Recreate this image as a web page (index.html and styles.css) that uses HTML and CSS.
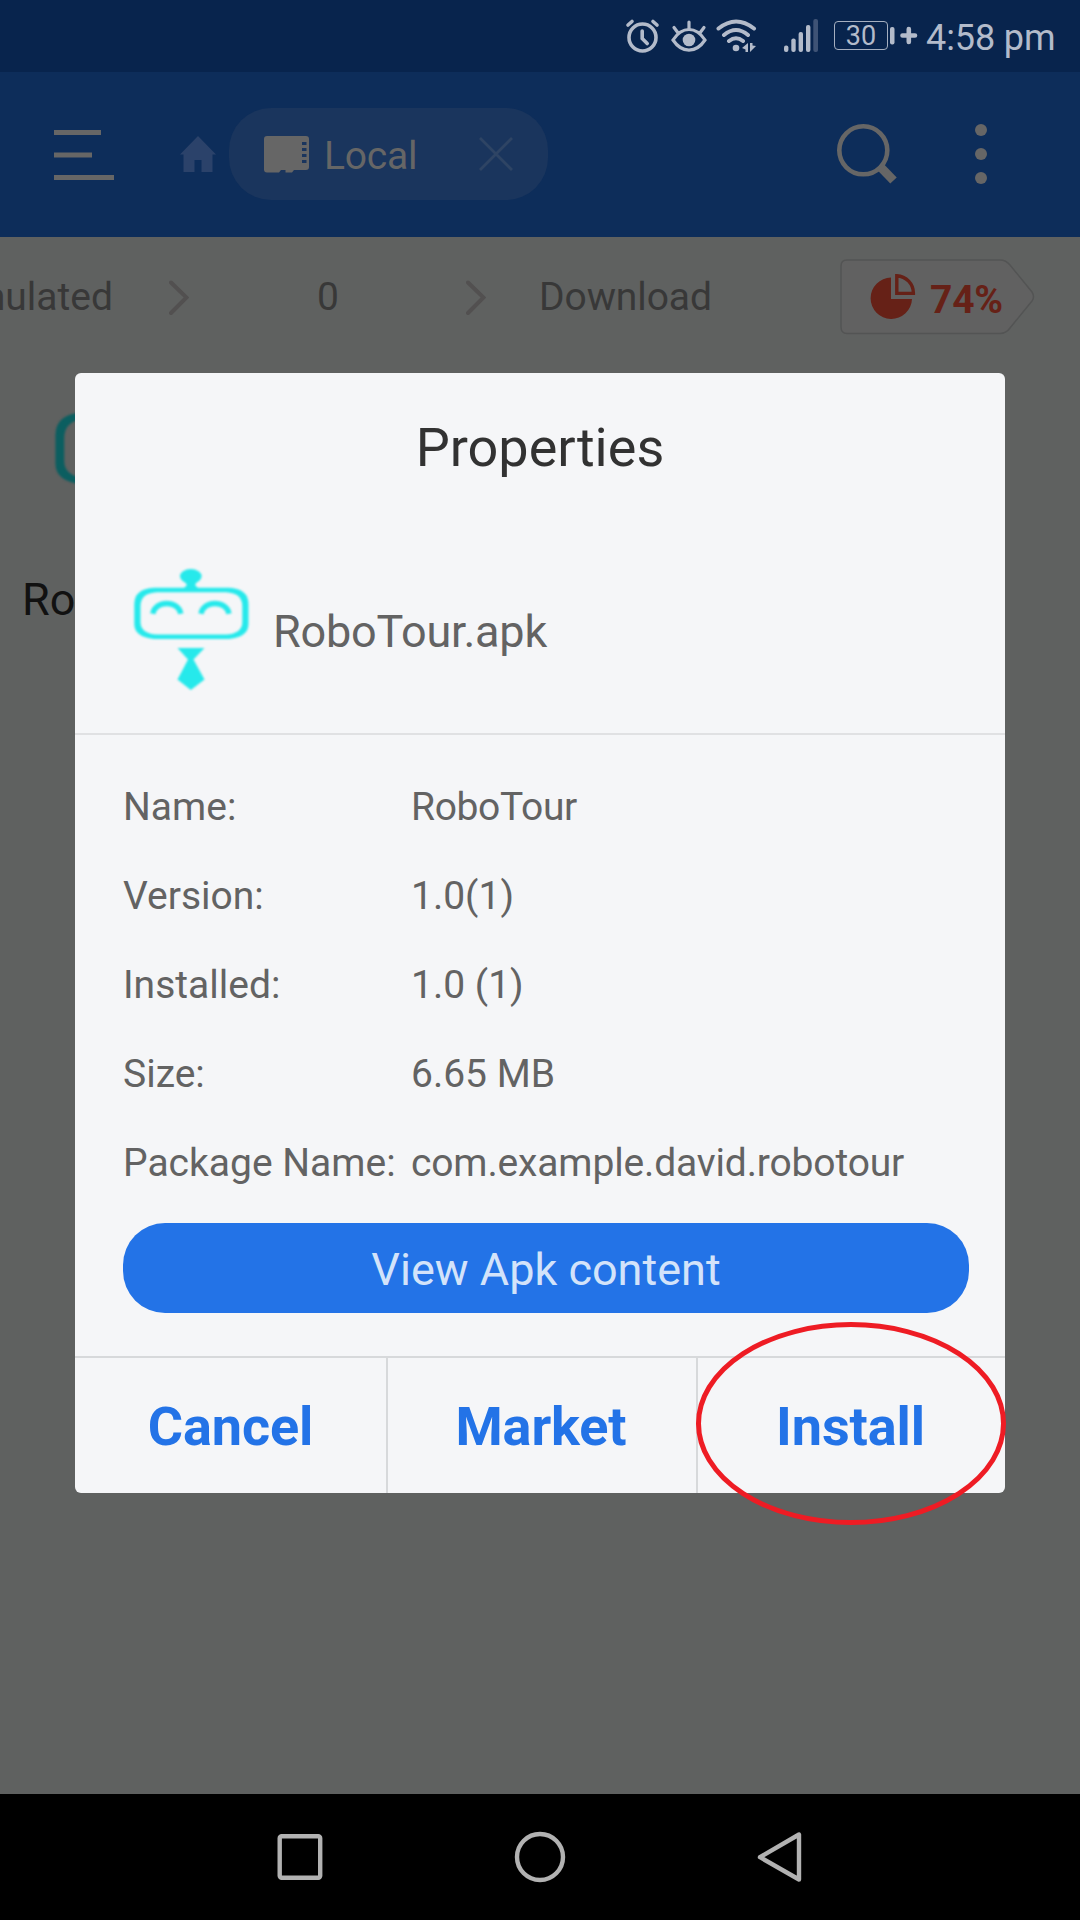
FILE: index.html
```html
<!DOCTYPE html>
<html lang="en">
<head>
<meta charset="utf-8">
<title>Properties</title>
<link rel="stylesheet" href="styles.css">
</head>
<body>
<svg class="defs" aria-hidden="true">
  <symbol id="robot" viewBox="0 0 115 122">
    <path fill-rule="evenodd" d="M20 18.800H95Q114.500 20 114.500 35V55Q114.500 68 95 70H20Q.3 68 .3 55V35Q.3 20 20 18.800zM23 23.200Q6.500 24 6.500 37V53Q6.500 64.500 23 65.600H92Q108.300 64.500 108.300 53V37Q108.300 24 92 23.200z" fill="currentColor"/>
    <ellipse cx="56.800" cy="7.300" rx="10.800" ry="7.200" fill="currentColor"/>
    <path d="M50 12h13.500l-2.500 4 5 5H48l5-5z" fill="currentColor"/>
    <path d="M18.800 44.800C21 31 44.500 31 46.800 44.800M67 44.800C69.200 31 92.700 31 95 44.800" fill="none" stroke="currentColor" stroke-width="5.400"/>
    <path d="M43.500 79h27L59.500 90.500 70.500 110.500 56.800 121 43.500 110.500 54 90.500z" fill="currentColor"/>
  </symbol>
</svg>
<div class="screen">
  <header class="status">
    <svg class="status-icons" viewBox="620 15 200 42">
      <g fill="none" stroke="#b3bbca" stroke-width="3.600" stroke-linecap="round">
        <circle cx="642.500" cy="37.500" r="13.500"/>
        <path d="M642.200 31v7.500l5 5M628 25l4-3.500M657 25l-4-3.500"/>
        <path d="M673 40C682 26 696 26 705 40C696 53.500 682 53.500 673 40zM689 22v7M674 27.500l4.500 6M704 27.500l-4.500 6" stroke-width="3.200"/>
        <path d="M718.500 28.500Q736 14.500 754 28.500M724 35Q736 25 748 35M729 41Q736 35.500 743 41" stroke-width="4"/>
      </g>
      <g fill="#b3bbca">
        <circle cx="689" cy="40" r="6.300"/>
        <circle cx="736" cy="48" r="3.300"/>
        <path d="M742 48l6-5v9h-2.500v-2.500zM756 46l-6 6v-9h2.500v2.500z"/>
        <rect x="784" y="45.500" width="4.400" height="6.500" rx="2"/>
        <rect x="791.300" y="38.500" width="4.400" height="13.500" rx="2"/>
        <rect x="798.600" y="32" width="4.400" height="20" rx="2"/>
        <rect x="806" y="25" width="4.400" height="27" rx="2"/>
        <rect x="813.300" y="19" width="4.700" height="33" rx="2" fill="#3f5375"/>
      </g>
    </svg>
    <span class="battery">30</span>
    <svg class="charge" viewBox="889 20 30 34"><rect x="890" y="27" width="4.500" height="17.500" rx="2" fill="#b3bbca"/><path d="M902.500 35.500h12.500M908.800 29v13" stroke="#b3bbca" stroke-width="4.600" stroke-linecap="round"/></svg>
    <span class="time">4:58 pm</span>
  </header>

  <nav class="appbar">
    <svg class="menu" viewBox="0 0 60 50"><path d="M0 2.500h47M0 25h38M0 47.500h60" stroke="#666" stroke-width="5"/></svg>
    <svg class="home" viewBox="0 0 36 36"><path d="M18 0L36 18.500H32.500V36H21.500V24H14.500V36H3.500V18.500H0z" fill="#2b426a"/></svg>
    <div class="tab">
      <svg class="card" viewBox="0 0 45 37"><path d="M3 0H42q3 0 3 3V31q0 3-3 3H30l-2 2.500H21.500V34H17l-2 2.500H3q-3 0-3-3V3q0-3 3-3z" fill="#666"/><path d="M38 6h4.500v3h-4.500zM38 12h4.500v3h-4.500zM38 18h4.500v3h-4.500zM38 24h4.500v3h-4.500z" fill="#1a355d"/></svg>
      <span>Local</span>
      <svg class="close" viewBox="0 0 34 34"><path d="M1 1L33 33M33 1L1 33" stroke="#2e4464" stroke-width="2.800"/></svg>
    </div>
    <svg class="search" viewBox="0 0 60 60"><circle cx="26.300" cy="26.300" r="24" fill="none" stroke="#666" stroke-width="4.600"/><path d="M43 42.500L56.500 56.500" stroke="#666" stroke-width="9"/></svg>
    <svg class="more" viewBox="0 0 12 60"><g fill="#666"><circle cx="6" cy="6" r="6"/><circle cx="6" cy="30" r="6"/><circle cx="6" cy="54" r="6"/></g></svg>
  </nav>

  <main class="files">
    <div class="crumbs">
      <span class="crumb first">emulated</span>
      <svg class="chev" viewBox="0 0 20 36"><path d="M2 2.500L17.500 17.500 2 33"/></svg>
      <span class="crumb zero">0</span>
      <svg class="chev" viewBox="0 0 20 36"><path d="M2 2.500L17.500 17.500 2 33"/></svg>
      <span class="crumb last">Download</span>
      <div class="usage">
        <svg class="tag" viewBox="0 0 196 76"><path d="M7 1H160Q166 1 170 6L192 33Q195 38 192 42L170 69Q166 74.500 160 74.500H7Q1 74.500 1 68V7Q1 1 7 1z" fill="#616161" stroke="#535454" stroke-width="1.500"/></svg>
        <svg class="pie" viewBox="0 0 46 46"><path d="M21 3.500A20.700 20.700 0 1 0 42 25H21z" fill="#662117"/><path d="M26.800 1.700V19.400H43.400A17.500 17.500 0 0 0 26.800 1.700z" fill="none" stroke="#662117" stroke-width="3.400"/></svg>
        <span>74%</span>
      </div>
    </div>
    <div class="file">
      <svg class="file-icon"><use href="#robot"/></svg>
      <span class="file-name">Ro</span>
    </div>
  </main>

  <footer class="navbar">
    <svg viewBox="0 0 52 52"><rect x="5.700" y="5.200" width="40.500" height="41.500" rx="2" /></svg>
    <svg viewBox="0 0 52 52"><circle cx="26" cy="26" r="23"/></svg>
    <svg viewBox="0 0 52 52"><path d="M45 3.500V48.500L6 26.200z"/></svg>
  </footer>

  <section class="dialog">
    <h1>Properties</h1>
    <div class="apk">
      <svg class="apk-icon"><use href="#robot"/></svg>
      <span>RoboTour.apk</span>
    </div>
    <dl class="details">
      <dt>Name:</dt><dd class="app-name">RoboTour</dd>
      <dt>Version:</dt><dd>1.0(1)</dd>
      <dt>Installed:</dt><dd>1.0 (1)</dd>
      <dt>Size:</dt><dd>6.65 MB</dd>
      <dt>Package Name:</dt><dd class="package">com.example.david.robotour</dd>
    </dl>
    <button class="view">View Apk content</button>
    <div class="actions">
      <button class="cancel">Cancel</button>
      <button>Market</button>
      <button>Install</button>
    </div>
  </section>
  <svg class="highlight" viewBox="0 0 310 204"><ellipse cx="155" cy="101.600" rx="152.500" ry="99"/></svg>
</div>
</body>
</html>
```
FILE: styles.css
```css
* { box-sizing: border-box; }
body {
  margin: 0;
  font-family: Roboto, "Liberation Sans", sans-serif;
}
svg { display: block; flex: none; }
.defs { position: absolute; width: 0; height: 0; }
button { border: 0; background: none; padding: 0; font-family: inherit; }

.screen {
  position: relative;
  width: 1080px;
  height: 1920px;
  display: grid;
  grid-template-rows: 72px 165px 1fr 126px;
  overflow: hidden;
  background: #5f6160;
}

/* Status bar */
.status {
  display: flex;
  align-items: flex-start;
  background: #08244d;
  color: #b3bbca;
  padding-left: 620px;
}
.status-icons { width: 200px; height: 42px; margin-top: 15px; }
.battery {
  width: 54px;
  height: 29px;
  margin: 21px 0 0 14px;
  border: 1.500px solid #a5afc0;
  border-radius: 4px;
  font-size: 27px;
  line-height: 29px;
  text-align: center;
}
.charge { width: 30px; height: 34px; margin: 20px 0 0 1px; }
.time { margin: 17px 0 0 7px; font-size: 36px; line-height: 42px; letter-spacing: -.1px; white-space: nowrap; }

/* App bar */
.appbar {
  display: flex;
  align-items: flex-start;
  background: #0d2d5a;
}
.menu { width: 60px; height: 50px; margin: 58px 0 0 54px; }
.home { width: 36px; height: 36px; margin: 64px 0 0 66px; }
.tab {
  display: flex;
  align-items: center;
  width: 319px;
  height: 92px;
  margin: 36px 0 0 13px;
  padding-left: 35px;
  border-radius: 42px;
  background: #1a355d;
  color: #666;
  font-size: 39px;
}
.card { width: 45px; height: 37px; }
.tab span { width: 91px; margin: 4px 0 0 15px; letter-spacing: -.2px; }
.close { width: 34px; height: 34px; margin-left: 64px; }
.search { width: 60px; height: 60px; margin: 52px 0 0 289px; }
.more { width: 12px; height: 60px; margin: 52px 0 0 78px; }

/* File list */
.crumbs {
  display: flex;
  align-items: flex-start;
  height: 120px;
  color: #383838;
  font-size: 39px;
  line-height: 46px;
}
.crumb { margin-top: 37px; }
.first { width: 113px; display: flex; justify-content: flex-end; }
.chev { width: 20px; height: 36px; margin: 43px 0 0 56px; fill: none; stroke: #525050; stroke-width: 4; stroke-linecap: round; }
.zero { width: 22px; margin-left: 128px; }
.zero + .chev { margin-left: 127px; }
.last { width: 174px; margin-left: 53px; letter-spacing: -.1px; }
.usage {
  display: grid;
  grid-template-columns: 30px 46px 120px;
  width: 196px;
  margin: 22px 0 0 126.500px;
  color: #662117;
  font-weight: 700;
}
.tag { grid-area: 1 / 1 / 2 / 4; width: 196px; height: 76px; }
.pie { grid-area: 1 / 2; width: 46px; height: 46px; margin-top: 15px; }
.usage span { grid-area: 1 / 3; margin: 18px 0 0 14.500px; letter-spacing: -.2px; }
.file { display: flex; flex-direction: column; width: 240px; }
.file-icon { width: 163px; height: 174px; margin: 28px 0 0 55px; color: #0b5e60; filter: blur(1px); }
.file-name { margin: 14px 0 0 22px; font-size: 45px; line-height: 53px; color: #111; }

/* System navigation */
.navbar {
  display: flex;
  justify-content: center;
  gap: 188px;
  padding-top: 37px;
  background: #000;
}
.navbar svg { width: 52px; height: 52px; fill: none; stroke: #b2b2b2; stroke-width: 4.400; stroke-linejoin: round; }

/* Properties dialog */
.dialog {
  position: absolute;
  left: 75px;
  top: 373px;
  width: 930px;
  height: 1120px;
  display: flex;
  flex-direction: column;
  border-radius: 6px;
  background: #f5f6f8;
  overflow: hidden;
}
h1 {
  margin: 43px 0 0;
  font-size: 54px;
  line-height: 64px;
  font-weight: 400;
  text-align: center;
  color: #323232;
}
.apk {
  display: flex;
  height: 255px;
  padding: 89px 0 0 59px;
  border-bottom: 2px solid #e0e1e3;
  color: #636363;
  font-size: 45px;
  line-height: 53px;
}
.apk-icon { width: 115px; height: 122px; color: #26e9eb; filter: blur(.8px); }
.apk span { margin: 36px 0 0 24px; letter-spacing: -.2px; }
.details {
  display: grid;
  grid-template-columns: 288px 1fr;
  grid-auto-rows: 89px;
  align-items: center;
  margin: 27px 0 0;
  padding-left: 48px;
  color: #636363;
  font-size: 39px;
}
dd { margin: 0; }
.app-name { letter-spacing: -.35px; }
.package { letter-spacing: -.15px; }
.view {
  flex: none;
  width: 846px;
  height: 90px;
  margin: 16px 0 0 48px;
  padding-top: 2px;
  border-radius: 42px;
  background: #2373e7;
  color: #d3e3fa;
  font-size: 45px;
}
.actions {
  display: grid;
  grid-template-columns: 311px 310px 1fr;
  height: 137px;
  margin-top: 43px;
  border-top: 2px solid #d7d9db;
}
.actions button { padding: 2px 2px 0 0; color: #2373e7; font-size: 54px; font-weight: 700; letter-spacing: -.1px; }
.actions .cancel { padding-right: 0; }
.actions button + button { border-left: 2px solid #d7d9db; }

/* Circle drawn around the Install action */
.highlight {
  position: absolute;
  left: 696px;
  top: 1322px;
  width: 310px;
  height: 204px;
  fill: none;
  stroke: #ee1c24;
  stroke-width: 5;
}
```
